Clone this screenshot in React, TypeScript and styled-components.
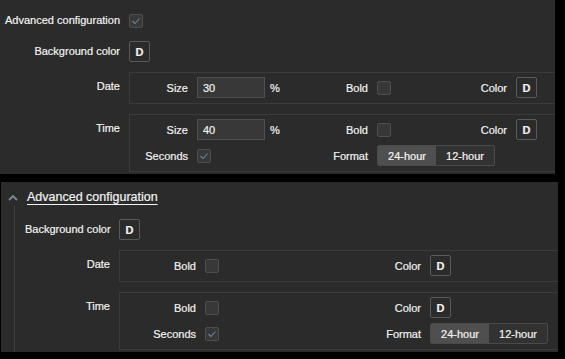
import React from "react";
import styled, { createGlobalStyle } from "styled-components";

const GlobalStyle = createGlobalStyle`
  html, body {
    margin: 0;
    background: #000000;
  }
  body {
    font-family: "Liberation Sans", Arial, sans-serif;
    font-size: 11px;
    color: #f2f2f2;
    -webkit-text-stroke: 0.2px #f2f2f2;
  }
`;

const Screen = styled.div`
  width: 565px;
  height: 359px;
  display: flex;
  flex-direction: column;
  gap: 8px;
  overflow: hidden;
`;

const Panel = styled.section<{ $w: number; $h: number; $ml?: number; $pt: number }>`
  box-sizing: border-box;
  width: ${(p) => p.$w}px;
  height: ${(p) => p.$h}px;
  margin-left: ${(p) => p.$ml ?? 0}px;
  padding-top: ${(p) => p.$pt}px;
  background: #2b2b2b;
  overflow: hidden;
  flex-shrink: 0;
`;

const Form = styled.div<{ $label: number }>`
  display: grid;
  grid-template-columns: ${(p) => p.$label}px 1fr;
  column-gap: 9px;
  row-gap: 10px;
  align-items: start;
`;

const Label = styled.div<{ $boxed?: boolean }>`
  text-align: right;
  white-space: nowrap;
  line-height: 21px;
  padding-top: ${(p) => (p.$boxed ? 4 : 0)}px;
`;

const Cell = styled.div`
  height: 21px;
  display: flex;
  align-items: center;
  gap: 5px;
`;

const FieldBox = styled.div<{ $cols: string }>`
  display: grid;
  grid-template-columns: ${(p) => p.$cols};
  grid-auto-rows: 21px;
  column-gap: 9px;
  row-gap: 5px;
  align-items: center;
  padding: 4px 0 5px;
  border: 1px solid #3b3b3b;
  border-right: none;
`;

const InnerLabel = styled.div`
  text-align: right;
  white-space: nowrap;
`;

const Input = styled.input`
  box-sizing: border-box;
  width: 68px;
  height: 21px;
  padding: 0 5px;
  background: #383838;
  border: 1px solid #4f4f4f;
  color: #f2f2f2;
  font: 11px "Liberation Sans", Arial, sans-serif;
  -webkit-text-stroke: 0.2px #f2f2f2;
  outline: none;
`;

const Unit = styled.span`
  font-size: 11px;
`;

const Box = styled.span`
  box-sizing: border-box;
  width: 14px;
  height: 14px;
  border: 1px solid #4f4f4f;
  border-radius: 2px;
  background: #383838;
  display: flex;
  align-items: center;
  justify-content: center;
`;

const ColorButton = styled.button`
  box-sizing: border-box;
  width: 21px;
  height: 21px;
  padding: 0;
  border: 1px solid #5a5a5a;
  border-radius: 2px;
  background: #2b2b2b;
  color: #f2f2f2;
  font: bold 11px "Liberation Sans", Arial, sans-serif;
`;

const Segmented = styled.div<{ $span: number }>`
  grid-column: auto / span ${(p) => p.$span};
  justify-self: start;
  display: flex;
  height: 21px;
  box-sizing: border-box;
  border: 1px solid #4a4a4a;
  border-radius: 2px;
  background: #323232;
  overflow: hidden;
`;

const Segment = styled.span<{ $active?: boolean }>`
  width: 58px;
  display: flex;
  align-items: center;
  justify-content: center;
  background: ${(p) => (p.$active ? "#4f4f4f" : "transparent")};
`;

const Header = styled.div`
  display: flex;
  align-items: center;
  gap: 9px;
  height: 18px;
  padding-left: 7px;
`;

const Title = styled.span`
  font-size: 12.5px;
  text-decoration: underline;
  text-decoration-thickness: 1px;
  text-underline-offset: 3px;
  white-space: nowrap;
`;

const Body = styled.div`
  margin-left: 13px;
  border-left: 1px solid #3f3f3f;
  padding: 13px 0 0 10px;
  height: 160px;
`;

function Check({ checked }: { checked?: boolean }) {
  return (
    <Box>
      {checked && (
        <svg width="10" height="8" viewBox="0 0 10 8">
          <polyline points="1.5,4 4,6.5 8.5,1.5" fill="none" stroke="#6f8694" strokeWidth="1.1" />
        </svg>
      )}
    </Box>
  );
}

function Chevron() {
  return (
    <svg width="10" height="7" viewBox="0 0 10 7">
      <polyline points="1,6 5,2 9,6" fill="none" stroke="#768d99" strokeWidth="1.8" />
    </svg>
  );
}

function FormatSwitch({ span }: { span: number }) {
  return (
    <Segmented $span={span}>
      <Segment $active>24-hour</Segment>
      <Segment>12-hour</Segment>
    </Segmented>
  );
}

const UPPER_COLS = "58px 83px 79px 53px 68px auto";
const LOWER_COLS = "76px 135px 72px auto";

export default function App() {
  return (
    <>
      <GlobalStyle />
      <Screen>
        <Panel $w={555} $h={174} $pt={10}>
          <Form $label={120}>
            <Label>Advanced configuration</Label>
            <Cell>
              <Check checked />
            </Cell>
            <Label>Background color</Label>
            <Cell>
              <ColorButton>D</ColorButton>
            </Cell>
            <Label $boxed>Date</Label>
            <FieldBox $cols={UPPER_COLS}>
              <InnerLabel>Size</InnerLabel>
              <Cell>
                <Input value="30" readOnly />
                <Unit>%</Unit>
              </Cell>
              <InnerLabel>Bold</InnerLabel>
              <Cell>
                <Check />
              </Cell>
              <InnerLabel>Color</InnerLabel>
              <Cell>
                <ColorButton>D</ColorButton>
              </Cell>
            </FieldBox>
            <Label $boxed>Time</Label>
            <FieldBox $cols={UPPER_COLS}>
              <InnerLabel>Size</InnerLabel>
              <Cell>
                <Input value="40" readOnly />
                <Unit>%</Unit>
              </Cell>
              <InnerLabel>Bold</InnerLabel>
              <Cell>
                <Check />
              </Cell>
              <InnerLabel>Color</InnerLabel>
              <Cell>
                <ColorButton>D</ColorButton>
              </Cell>
              <InnerLabel>Seconds</InnerLabel>
              <Cell>
                <Check checked />
              </Cell>
              <InnerLabel>Format</InnerLabel>
              <FormatSwitch span={3} />
            </FieldBox>
          </Form>
        </Panel>

        <Panel $w={557} $h={170} $ml={1} $pt={6}>
          <Header>
            <Chevron />
            <Title>Advanced configuration</Title>
          </Header>
          <Body>
            <Form $label={85}>
              <Label>Background color</Label>
              <Cell>
                <ColorButton>D</ColorButton>
              </Cell>
              <Label $boxed>Date</Label>
              <FieldBox $cols={LOWER_COLS}>
                <InnerLabel>Bold</InnerLabel>
                <Cell>
                  <Check />
                </Cell>
                <InnerLabel>Color</InnerLabel>
                <Cell>
                  <ColorButton>D</ColorButton>
                </Cell>
              </FieldBox>
              <Label $boxed>Time</Label>
              <FieldBox $cols={LOWER_COLS}>
                <InnerLabel>Bold</InnerLabel>
                <Cell>
                  <Check />
                </Cell>
                <InnerLabel>Color</InnerLabel>
                <Cell>
                  <ColorButton>D</ColorButton>
                </Cell>
                <InnerLabel>Seconds</InnerLabel>
                <Cell>
                  <Check checked />
                </Cell>
                <InnerLabel>Format</InnerLabel>
                <FormatSwitch span={1} />
              </FieldBox>
            </Form>
          </Body>
        </Panel>
      </Screen>
    </>
  );
}
